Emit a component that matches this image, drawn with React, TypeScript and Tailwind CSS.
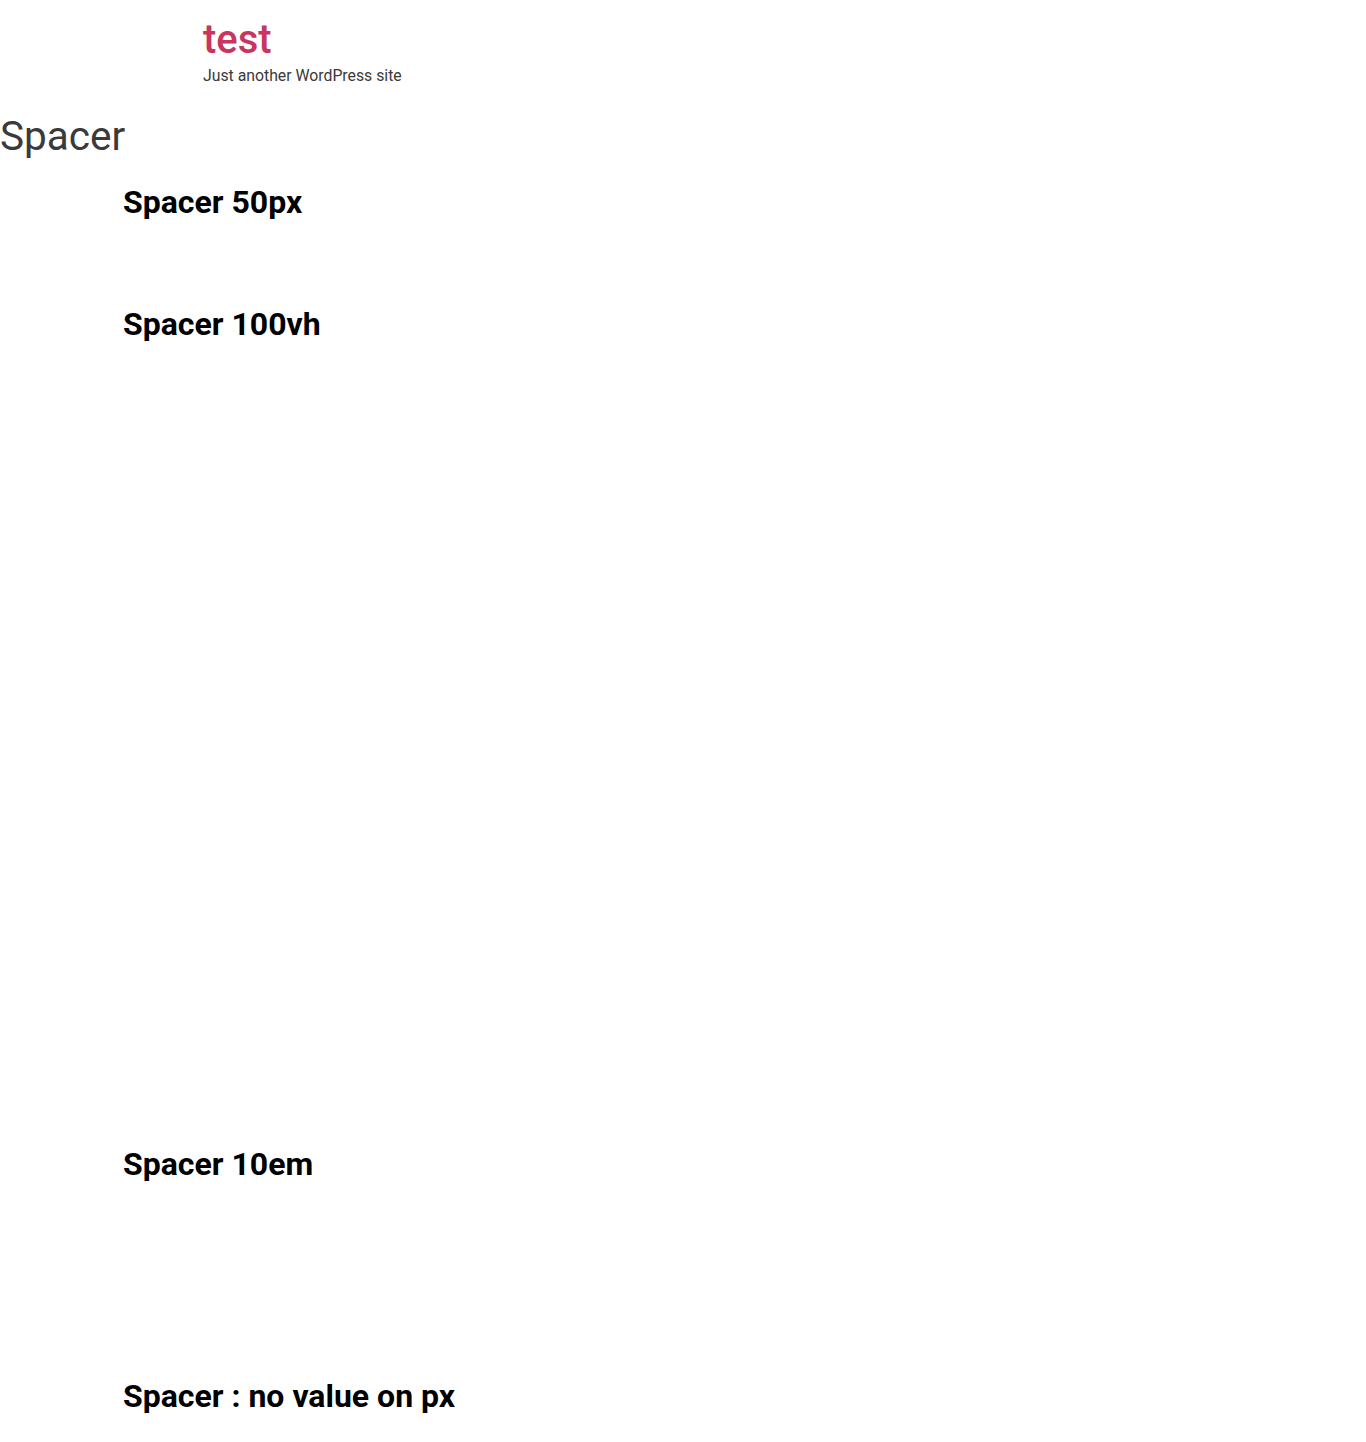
const sections = [
  { title: "Spacer 50px", gap: "h-[50px]" },
  { title: "Spacer 100vh", gap: "h-[768px]" },
  { title: "Spacer 10em", gap: "h-[160px]" },
];

const App = () => {
  return (
    <div className="min-h-[1442px] bg-white font-['Roboto','Liberation_Sans',sans-serif]">
      {/* Site header */}
      <header className="pt-[16px] pl-[203px]">
        <p className="text-[40px] leading-[48px] font-medium text-[#c83660]">test</p>
        <p className="text-[15.8px] leading-[24px] text-[#3a3a3a]">Just another WordPress site</p>
      </header>

      <main className="mt-[24px]">
        <h1 className="text-[40.5px] leading-[48px] font-normal text-[#3a3a3a]">Spacer</h1>

        <div className="mt-[23px] pl-[123px]">
          {sections.map((s) => (
            <div key={s.title}>
              <h2 className="text-[32px] leading-[38px] font-bold text-black">{s.title}</h2>
              <div className={`my-[17px] ${s.gap}`} />
            </div>
          ))}
          <h2 className="text-[32px] leading-[38px] font-bold text-black">Spacer : no value on px</h2>
        </div>
      </main>
    </div>
  );
};

export default App;
